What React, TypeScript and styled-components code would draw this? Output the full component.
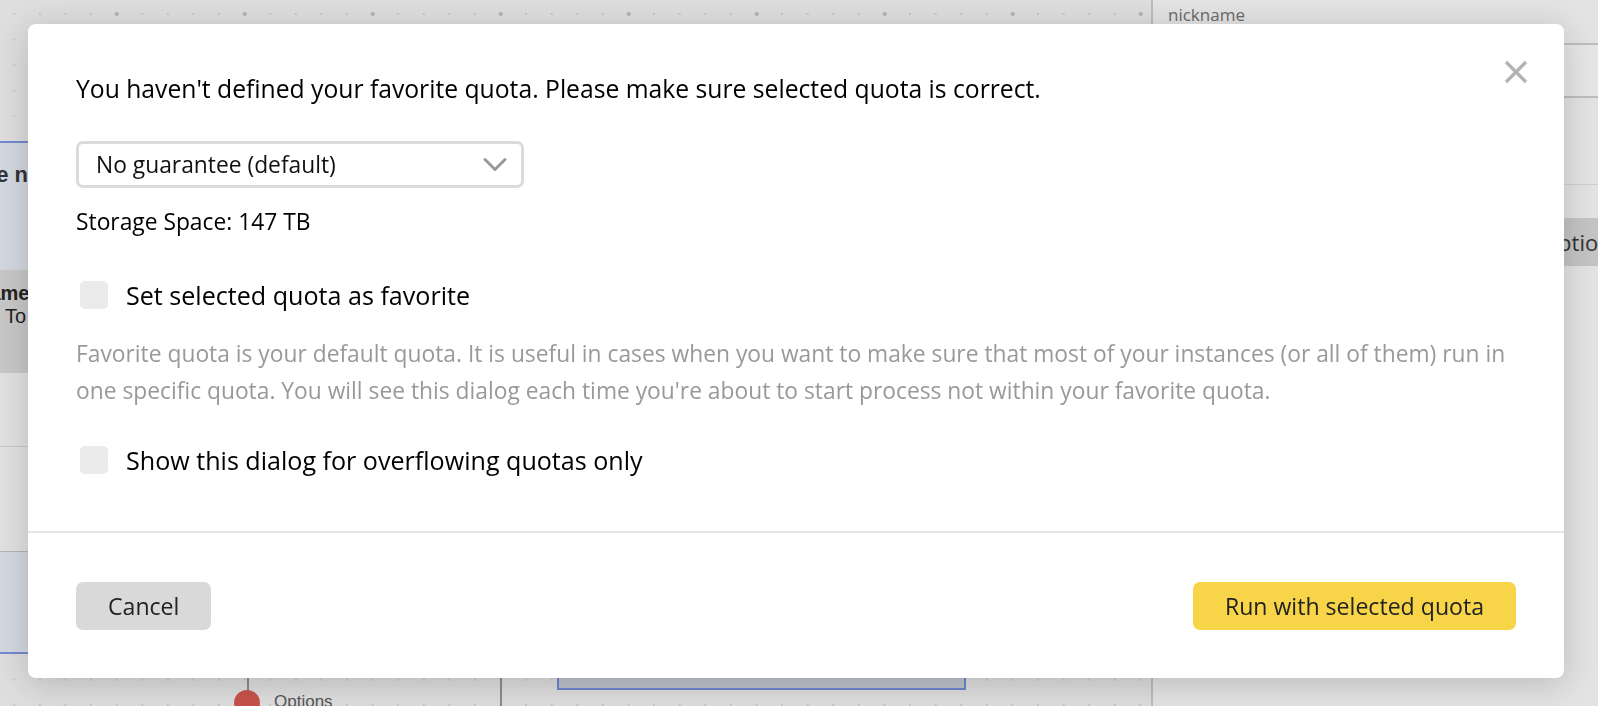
import React from "react";
import styled, { createGlobalStyle } from "styled-components";

const GlobalStyle = createGlobalStyle`
  html, body {
    margin: 0;
    padding: 0;
  }
  body {
    width: 1598px;
    height: 706px;
    overflow: hidden;
    background: #dedede;
    font-family: "Open Sans", "Noto Sans", sans-serif;
  }
  #root {
    height: 706px;
  }
`;

/* ---------- page behind the dialog ---------- */

const Page = styled.div`
  display: flex;
  height: 706px;
  overflow: hidden;
`;

const Canvas = styled.div`
  position: relative;
  flex: 0 0 1151px;
  overflow: hidden;
  border-right: 2px solid #bcbcbc;
  background-color: #dedede;
  background-image: radial-gradient(circle, #b4b4b4 1.6px, transparent 2.3px),
    radial-gradient(circle, #c6c6c6 0.9px, transparent 1.5px);
  background-size: 128px 128px, 25.6px 25.6px;
  background-position: 52.7px -50px, 1.5px 1.2px;
  font-family: "Liberation Sans", Arial, sans-serif;
`;

const StageNode = styled.div`
  position: absolute;
  left: -320px;
  top: 141px;
  width: 720px;
  display: flex;
  flex-direction: column;
  border-top: 2px solid #7489cf;
  border-bottom: 2px solid #7489cf;
  background: #d3d8e0;
`;

const StageTitle = styled.div`
  height: 127px;
  box-sizing: border-box;
  padding: 17px 328px 0 0;
  text-align: right;
  font-size: 22px;
  line-height: 30px;
  font-weight: 700;
  color: #333;
`;

const StageTableHead = styled.div`
  height: 102px;
  box-sizing: border-box;
  padding: 12px 0 0 325px;
  background: #c8c8c8;
  font-size: 20px;
  line-height: 23px;
  color: #222;
`;

const HeadCell = styled.div<{ $bold?: boolean; $shift?: number }>`
  font-weight: ${({ $bold }) => ($bold ? 700 : 400)};
  margin-left: ${({ $shift }) => $shift ?? 0}px;
`;

const StageRow = styled.div<{ $height: number; $strong?: boolean }>`
  height: ${({ $height }) => $height}px;
  box-sizing: border-box;
  background: #e1e1e1;
  border-top: ${({ $strong }) => ($strong ? "1px solid #b4b4b4" : "1px solid #c9c9c9")};
`;

const StageFooter = styled.div`
  height: 100px;
  border-top: 1px solid #b4b4b4;
  background: #d3d8e0;
`;

const Edge = styled.div<{ $x: number; $top: number; $height: number }>`
  position: absolute;
  left: ${({ $x }) => $x}px;
  top: ${({ $top }) => $top}px;
  width: 1.5px;
  height: ${({ $height }) => $height}px;
  background: #8c8c8c;
`;

const Port = styled.div`
  position: absolute;
  left: 234px;
  top: 690px;
  width: 26px;
  height: 26px;
  border-radius: 50%;
  background: #c8534b;
`;

const PortLabel = styled.div`
  position: absolute;
  left: 274px;
  top: 691px;
  font-size: 17px;
  line-height: 22px;
  color: #555;
`;

const ResultNode = styled.div`
  position: absolute;
  left: 557px;
  top: 560px;
  width: 409px;
  height: 130px;
  box-sizing: border-box;
  border: 2px solid #6e86cf;
  background: #bdc3cd;
`;

const SidePanel = styled.aside`
  flex: 1;
  display: flex;
  flex-direction: column;
  background: #e3e3e3;
`;

const FieldLabel = styled.div`
  height: 30px;
  padding-left: 15px;
  font-size: 17px;
  line-height: 30px;
  color: #6a6a6a;
`;

const FieldInput = styled.div`
  margin-top: 13px;
  height: 55px;
  box-sizing: border-box;
  border-top: 2px solid #bdbdbd;
  border-bottom: 2px solid #bdbdbd;
  background: #e6e6e6;
`;

const PanelSeparator = styled.div`
  margin-top: 86px;
  height: 1px;
  background: #cfcfcf;
`;

const PanelButton = styled.div`
  margin-top: 33px;
  height: 48px;
  padding-left: 388px;
  background: #c4c4c4;
  font-family: "Open Sans", sans-serif;
  font-size: 22px;
  line-height: 48px;
  color: #333;
  white-space: nowrap;
`;

/* ---------- dialog ---------- */

const Backdrop = styled.div`
  position: fixed;
  inset: 0;
  display: flex;
  justify-content: center;
  align-items: flex-start;
  padding: 24px 34px 0 28px;
`;

const Dialog = styled.div`
  position: relative;
  width: 1536px;
  background: #fff;
  border-radius: 8px;
  box-shadow: 0 6px 34px rgba(0, 0, 0, 0.18);
  color: #000;
`;

const CloseButton = styled.button`
  position: absolute;
  top: 36px;
  right: 36px;
  width: 24px;
  height: 24px;
  padding: 0;
  border: none;
  background: none;
  cursor: pointer;
  display: flex;
`;

const Body = styled.div`
  display: flex;
  flex-direction: column;
  align-items: flex-start;
  padding: 48px 48px 54px;
`;

const Title = styled.h2`
  margin: 0;
  font-size: 24.7px;
  line-height: 34px;
  font-weight: 400;
`;

const QuotaSelect = styled.button`
  margin-top: 35px;
  width: 448px;
  height: 47px;
  box-sizing: border-box;
  display: flex;
  align-items: center;
  justify-content: space-between;
  padding: 0 14px 0 17px;
  border: 3px solid #dadada;
  border-radius: 7px;
  background: #fff;
  font-family: inherit;
  font-size: 22.8px;
  color: #111;
  cursor: pointer;
`;

const Info = styled.div`
  margin-top: 18px;
  font-size: 22.8px;
  line-height: 32px;
`;

const CheckRow = styled.label<{ $gap: number }>`
  margin-top: ${({ $gap }) => $gap}px;
  display: flex;
  align-items: center;
  gap: 18px;
  height: 34px;
  font-size: 25.1px;
  line-height: 34px;
  cursor: pointer;
`;

const CheckBox = styled.span`
  margin-left: 4px;
  width: 28px;
  height: 28px;
  border-radius: 5px;
  background: #ebebeb;
`;

const Hint = styled.p`
  margin: 24px 0 0;
  font-size: 22.8px;
  line-height: 36.5px;
  color: #999;
`;

const Footer = styled.div`
  display: flex;
  justify-content: space-between;
  padding: 49px 48px 48px;
  border-top: 2px solid #e6e6e6;
`;

const Button = styled.button<{ $primary?: boolean }>`
  height: 48px;
  padding: 0 32px;
  border: none;
  border-radius: 7px;
  background: ${({ $primary }) => ($primary ? "#f8d548" : "#d9d9d9")};
  font-family: inherit;
  font-size: 23.1px;
  color: #222;
  cursor: pointer;
`;

const App: React.FC = () => {
  return (
    <>
      <GlobalStyle />
      <Page>
        <Canvas>
          <StageNode>
            <StageTitle>Some name</StageTitle>
            <StageTableHead>
              <HeadCell $bold $shift={-30}>
                Name
              </HeadCell>
              <HeadCell>To Do</HeadCell>
            </StageTableHead>
            <StageRow $height={74} />
            <StageRow $height={105} />
            <StageFooter />
          </StageNode>
          <Edge $x={247} $top={600} $height={92} />
          <Port />
          <PortLabel>Options</PortLabel>
          <Edge $x={500} $top={600} $height={106} />
          <ResultNode />
        </Canvas>
        <SidePanel>
          <FieldLabel>nickname</FieldLabel>
          <FieldInput />
          <PanelSeparator />
          <PanelButton>Options</PanelButton>
        </SidePanel>
      </Page>

      <Backdrop>
        <Dialog role="dialog">
          <CloseButton aria-label="Close">
            <svg width="24" height="24" viewBox="0 0 24 24">
              <path
                d="M2 2 L22 22 M22 2 L2 22"
                stroke="#b3b3b3"
                strokeWidth="3.2"
                fill="none"
              />
            </svg>
          </CloseButton>
          <Body>
            <Title>
              You haven't defined your favorite quota. Please make sure selected
              quota is correct.
            </Title>
            <QuotaSelect>
              <span>No guarantee (default)</span>
              <svg width="24" height="16" viewBox="0 0 24 16">
                <path
                  d="M2 2.5 L12 12.5 L22 2.5"
                  stroke="#999"
                  strokeWidth="3"
                  fill="none"
                  strokeLinecap="round"
                  strokeLinejoin="round"
                />
              </svg>
            </QuotaSelect>
            <Info>Storage Space: 147 TB</Info>
            <CheckRow $gap={40}>
              <CheckBox />
              Set selected quota as favorite
            </CheckRow>
            <Hint>
              Favorite quota is your default quota. It is useful in cases when
              you want to make sure that most of your instances (or all of them)
              run in one specific quota. You will see this dialog each time
              you're about to start process not within your favorite quota.
            </Hint>
            <CheckRow $gap={34}>
              <CheckBox />
              Show this dialog for overflowing quotas only
            </CheckRow>
          </Body>
          <Footer>
            <Button>Cancel</Button>
            <Button $primary>Run with selected quota</Button>
          </Footer>
        </Dialog>
      </Backdrop>
    </>
  );
};

export default App;
